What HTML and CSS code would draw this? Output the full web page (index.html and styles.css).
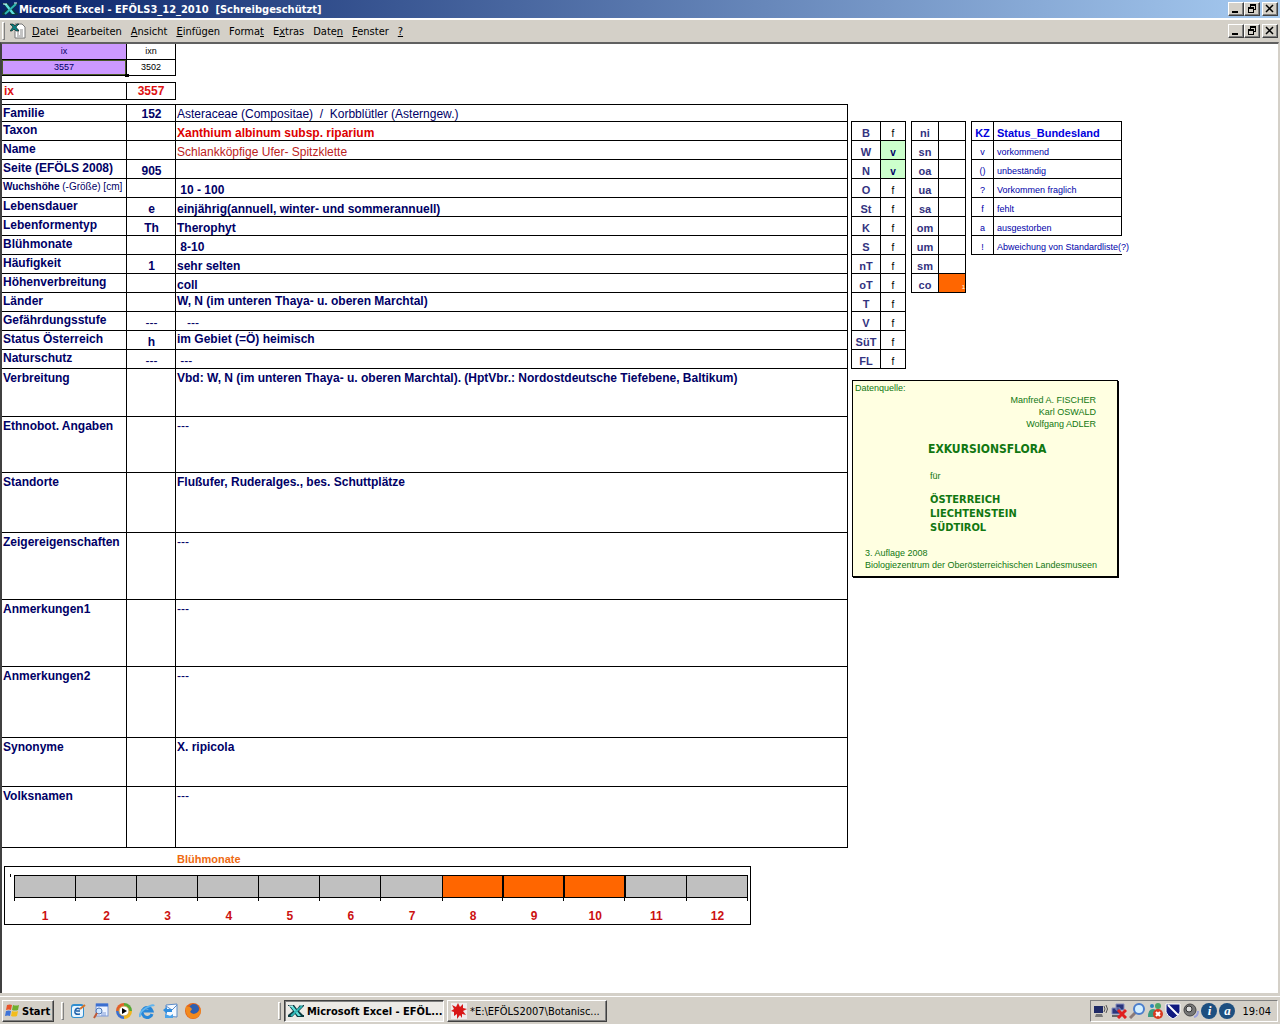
FILE: index.html
```html
<!DOCTYPE html>
<html lang="de">
<head>
    <meta charset="UTF-8">
    <meta name="viewport" content="width=device-width, initial-scale=1.0">
    <title>Microsoft Excel - EFÖLS3_12_2010 [Schreibgeschützt]</title>
    <link rel="stylesheet" href="styles.css">
</head>
<body>
    <!-- Shared icons -->
    <svg class="defs" aria-hidden="true">
        <symbol id="excel" viewBox="0 0 16 16">
            <path d="M0 2h6l3 4 3-4h4v1l-5 5 4 4h1v2H9l-2-3-3 3H0v-2l5-4-4-5H0z" fill="#0a3a40"/>
            <path d="M2 3h3l8 10h-3z" fill="#5fe0dc"/>
            <path d="M14 3L3 13" stroke="#2fb5b5" stroke-width="2"/>
            <path d="M1 3h4M12 2h3" stroke="#d8ffff"/>
        </symbol>
        <symbol id="min" viewBox="0 0 12 10"><path d="M2 7h6v2H2z"/></symbol>
        <symbol id="restore" viewBox="0 0 12 10">
            <path d="M4 0h6v6H8V5h1V2H5v1H4zM2 3h6v6H2zM3 5v3h4V5z" fill-rule="evenodd"/>
        </symbol>
        <symbol id="close" viewBox="0 0 12 10"><path d="M2 1l7 7M9 1L2 8" stroke="#000" stroke-width="1.5"/></symbol>
    </svg>

    <header class="titlebar">
        <svg class="icon"><use href="#excel"/></svg>
        <h1>Microsoft Excel - EFÖLS3_12_2010&nbsp; [Schreibgeschützt]</h1>
        <div class="winbuttons">
            <button aria-label="Minimieren"><svg><use href="#min"/></svg></button>
            <button aria-label="Wiederherstellen"><svg><use href="#restore"/></svg></button>
            <button class="close" aria-label="Schließen"><svg><use href="#close"/></svg></button>
        </div>
    </header>

    <nav class="menubar">
        <span class="grip"></span>
        <svg class="icon" viewBox="0 0 16 16">
            <path d="M5 1h7l3 3v11H5z" fill="#fff" stroke="#777"/>
            <path d="M7 7h2M10 7h3M7 9h2M10 9h3M7 11h2M10 11h3M7 13h6" stroke="#888"/>
            <path d="M0 1h3l2 2 2-2h2L6 4l3 4H6L4 6 2 8H0l3-4z" fill="#0b7f80" stroke="#000" stroke-width=".5"/>
        </svg>
        <button><u>D</u>atei</button>
        <button><u>B</u>earbeiten</button>
        <button><u>A</u>nsicht</button>
        <button><u>E</u>infügen</button>
        <button>Forma<u>t</u></button>
        <button>E<u>x</u>tras</button>
        <button>Date<u>n</u></button>
        <button><u>F</u>enster</button>
        <button><u>?</u></button>
        <div class="winbuttons">
            <button aria-label="Minimieren"><svg><use href="#min"/></svg></button>
            <button aria-label="Wiederherstellen"><svg><use href="#restore"/></svg></button>
            <button class="close" aria-label="Schließen"><svg><use href="#close"/></svg></button>
        </div>
    </nav>

    <main class="sheet">
        <div class="columns">
            <div class="left">
                <table class="grid index">
                    <tr><td class="purple">ix</td><td>ixn</td></tr>
                    <tr><td class="purple selected">3557</td><td>3502</td></tr>
                </table>
                <table class="grid current">
                    <tr><th scope="row">ix</th><td>3557</td></tr>
                </table>

                <!-- Species record -->
                <table class="grid record">
                    <colgroup><col class="c-label"><col class="c-code"><col class="c-text"></colgroup>
                    <tr class="first"><th scope="row">Familie</th><td>152</td><td class="plain">Asteraceae (Compositae)&nbsp; /&nbsp; Korbblütler (Asterngew.)</td></tr>
                    <tr><th scope="row">Taxon</th><td></td><td class="red">Xanthium albinum subsp. riparium</td></tr>
                    <tr><th scope="row">Name</th><td></td><td class="plain darkred">Schlankköpfige Ufer- Spitzklette</td></tr>
                    <tr><th scope="row">Seite (EFÖLS 2008)</th><td>905</td><td></td></tr>
                    <tr><th scope="row" class="small">Wuchshöhe <span>(-Größe) [cm]</span></th><td></td><td>&nbsp;10 - 100</td></tr>
                    <tr><th scope="row">Lebensdauer</th><td>e</td><td>einjährig(annuell, winter- und sommerannuell)</td></tr>
                    <tr><th scope="row">Lebenformentyp</th><td>Th</td><td>Therophyt</td></tr>
                    <tr><th scope="row">Blühmonate</th><td></td><td>&nbsp;8-10</td></tr>
                    <tr><th scope="row">Häufigkeit</th><td>1</td><td>sehr selten</td></tr>
                    <tr><th scope="row">Höhenverbreitung</th><td></td><td>coll</td></tr>
                    <tr><th scope="row">Länder</th><td></td><td class="top">W, N (im unteren Thaya- u. oberen Marchtal)</td></tr>
                    <tr><th scope="row">Gefährdungsstufe</th><td class="plain">---</td><td class="plain">&nbsp;&nbsp; ---</td></tr>
                    <tr><th scope="row">Status Österreich</th><td>h</td><td class="top">im Gebiet (=Ö) heimisch</td></tr>
                    <tr><th scope="row">Naturschutz</th><td class="plain">---</td><td class="plain">&nbsp;---</td></tr>
                    <tr class="tall h48"><th scope="row">Verbreitung</th><td></td><td>Vbd: W, N (im unteren Thaya- u. oberen Marchtal). (HptVbr.: Nordostdeutsche Tiefebene, Baltikum)</td></tr>
                    <tr class="tall h56"><th scope="row">Ethnobot. Angaben</th><td></td><td class="plain">---</td></tr>
                    <tr class="tall h60"><th scope="row">Standorte</th><td></td><td>Flußufer, Ruderalges., bes. Schuttplätze</td></tr>
                    <tr class="tall h67"><th scope="row">Zeigereigenschaften</th><td></td><td class="plain">---</td></tr>
                    <tr class="tall h67"><th scope="row">Anmerkungen1</th><td></td><td class="plain">---</td></tr>
                    <tr class="tall h71"><th scope="row">Anmerkungen2</th><td></td><td class="plain">---</td></tr>
                    <tr class="tall h49"><th scope="row">Synonyme</th><td></td><td>X. ripicola</td></tr>
                    <tr class="tall h61"><th scope="row">Volksnamen</th><td></td><td class="plain">---</td></tr>
                </table>
            </div>

            <div class="right">
                <div class="codes">
                    <table class="grid boxed states">
                        <tr><th scope="row">B</th><td>f</td></tr>
                        <tr><th scope="row">W</th><td class="green">v</td></tr>
                        <tr><th scope="row">N</th><td class="green">v</td></tr>
                        <tr><th scope="row">O</th><td>f</td></tr>
                        <tr><th scope="row">St</th><td>f</td></tr>
                        <tr><th scope="row">K</th><td>f</td></tr>
                        <tr><th scope="row">S</th><td>f</td></tr>
                        <tr><th scope="row">nT</th><td>f</td></tr>
                        <tr><th scope="row">oT</th><td>f</td></tr>
                        <tr><th scope="row">T</th><td>f</td></tr>
                        <tr><th scope="row">V</th><td>f</td></tr>
                        <tr><th scope="row">SüT</th><td>f</td></tr>
                        <tr><th scope="row">FL</th><td>f</td></tr>
                    </table>
                    <table class="grid boxed levels">
                        <tr><th scope="row">ni</th><td></td></tr>
                        <tr><th scope="row">sn</th><td></td></tr>
                        <tr><th scope="row">oa</th><td></td></tr>
                        <tr><th scope="row">ua</th><td></td></tr>
                        <tr><th scope="row">sa</th><td></td></tr>
                        <tr><th scope="row">om</th><td></td></tr>
                        <tr><th scope="row">um</th><td></td></tr>
                        <tr><th scope="row">sm</th><td></td></tr>
                        <tr><th scope="row">co</th><td class="orange">1</td></tr>
                    </table>
                    <table class="grid boxed legend">
                        <tr><th scope="col">KZ</th><th scope="col">Status_Bundesland</th></tr>
                        <tr><td>v</td><td>vorkommend</td></tr>
                        <tr><td>()</td><td>unbeständig</td></tr>
                        <tr><td>?</td><td>Vorkommen fraglich</td></tr>
                        <tr><td>f</td><td>fehlt</td></tr>
                        <tr><td>a</td><td>ausgestorben</td></tr>
                        <tr><td>!</td><td class="open">Abweichung von Standardliste(?)</td></tr>
                    </table>
                </div>

                <aside class="source">
                    <p>Datenquelle:</p>
                    <p class="authors">Manfred A. FISCHER<br>Karl OSWALD<br>Wolfgang ADLER</p>
                    <h2>EXKURSIONSFLORA</h2>
                    <p class="for">für</p>
                    <p class="countries">ÖSTERREICH<br>LIECHTENSTEIN<br>SÜDTIROL</p>
                    <p class="edition">3. Auflage 2008<br>Biologiezentrum der Oberösterreichischen Landesmuseen</p>
                </aside>
            </div>
        </div>

        <!-- Flowering months -->
        <section class="bloom">
            <h2>Blühmonate</h2>
            <ol class="months">
                <li><i></i>1</li>
                <li><i></i>2</li>
                <li><i></i>3</li>
                <li><i></i>4</li>
                <li><i></i>5</li>
                <li><i></i>6</li>
                <li><i></i>7</li>
                <li class="on"><i></i>8</li>
                <li class="on"><i></i>9</li>
                <li class="on"><i></i>10</li>
                <li><i></i>11</li>
                <li><i></i>12</li>
            </ol>
        </section>
    </main>

    <footer class="taskbar">
        <button class="start">
            <svg viewBox="0 0 16 16">
                <path d="M3 2q3-1 5 0L7 7q-2-1-5 0z" fill="#e8542a"/>
                <path d="M9 2q3 1 6 0l-1 5q-3 1-6 0z" fill="#6fae2e"/>
                <path d="M2 8q3-1 5 0l-1 5q-2-1-5 0z" fill="#3f74d8"/>
                <path d="M8 8q3 1 6 0l-1 5q-3 1-6 0z" fill="#f3bd1c"/>
            </svg>
            Start
        </button>
        <span class="bar"></span>
        <div class="quick">
            <a href="#" aria-label="Desktop"><svg viewBox="0 0 16 16">
                <rect x="1" y="1" width="13" height="14" rx="3" fill="#2f8ed0"/>
                <rect x="2" y="3" width="11" height="11" rx="2" fill="#e8f5ff"/>
                <path d="M10 6Q6 4 5 8t5 3M6 8h4" fill="none" stroke="#1d5fa8" stroke-width="1.5"/>
                <path d="M10 6l5-4" stroke="#d6742a" stroke-width="2"/>
            </svg></a>
            <a href="#" aria-label="Suche"><svg viewBox="0 0 16 16">
                <rect x="3" y="1" width="12" height="12" fill="#eef4ff" stroke="#7d9ad8"/>
                <path d="M3 2h12" stroke="#3b6fd0" stroke-width="3"/>
                <path d="M8 10h5M8 12h5" stroke="#7d9ad8"/>
                <circle cx="6" cy="8" r="3" fill="#cfe6ff" stroke="#5077b5"/>
                <path d="M4 10l-3 5" stroke="#c05a35" stroke-width="2"/>
            </svg></a>
            <a href="#" aria-label="Media Player"><svg viewBox="0 0 16 16">
                <path d="M8 8V0a8 8 0 0 1 8 8z" fill="#57a834"/>
                <path d="M8 8h8a8 8 0 0 1-8 8z" fill="#f0b51c"/>
                <path d="M8 8v8a8 8 0 0 1-8-8z" fill="#3b6fd0"/>
                <path d="M8 8H0a8 8 0 0 1 8-8z" fill="#e2602a"/>
                <circle cx="8" cy="8" r="5" fill="#fff" stroke="#c9a24a"/>
                <path d="M6 5l5 3-5 3z" fill="#000"/>
            </svg></a>
            <a href="#" aria-label="Internet Explorer"><svg viewBox="0 0 16 16">
                <path d="M13 11a5 5 0 1 1 0-3H5" fill="none" stroke="#2786d8" stroke-width="3"/>
                <path d="M1 14Q0 9 7 5t8-2" fill="none" stroke="#62b5ee" stroke-width="2"/>
            </svg></a>
            <a href="#" aria-label="Outlook Express"><svg viewBox="0 0 16 16">
                <path d="M4 2l11-1v13l-11-1z" fill="#f4f9ff" stroke="#5b8bc8"/>
                <path d="M4 3l6 4 5-5" fill="none" stroke="#5b8bc8"/>
                <path d="M1 7l4-3v2h5v3H5v2z" fill="#2f8ee0"/>
                <path d="M3 11v4h8v-4l-3 2z" fill="#4aa3ea"/>
            </svg></a>
            <a href="#" aria-label="Firefox"><svg viewBox="0 0 16 16">
                <circle cx="8" cy="8" r="8" fill="#e4641a"/>
                <circle cx="9" cy="6" r="5" fill="#2f5fb0"/>
                <path d="M1 3q2 1 4 1l2 2-2 3q3 4 8 0 3-3 1-6 4 6-1 11-7 4-11-2-2-4-1-9z" fill="#f28a1e"/>
            </svg></a>
        </div>
        <span class="bar"></span>
        <button class="task active"><svg class="icon"><use href="#excel"/></svg>Microsoft Excel - EFÖL...</button>
        <button class="task">
            <svg class="icon" viewBox="0 0 16 16">
                <rect width="16" height="16" fill="#eee"/>
                <path d="M7 0l2 4 3-3v4l4 1-4 2 3 4-4-1v4l-2-3-3 4V11l-3 2V9L0 8l3-2-2-4 4 2z" fill="#d81818"/>
            </svg>
            *E:\EFÖLS2007\Botanisc...
        </button>
        <div class="tray">
            <svg viewBox="0 0 16 16">
                <path d="M1 3h9v7H1z" fill="#1f2a66"/><path d="M3 11h6l1 3H2z" fill="#777"/>
                <path d="M11 3q2 3 0 6M13 2q3 4 0 8" fill="none" stroke="#555"/>
            </svg>
            <svg viewBox="0 0 16 16">
                <path d="M5 1h8v6H5zM1 5h8v6H1z" fill="#2a357d" stroke="#8890c0"/><path d="M1 13h8" stroke="#666" stroke-width="2"/>
                <path d="M7 7l8 8M15 7l-8 8" stroke="#e02020" stroke-width="3"/>
            </svg>
            <svg viewBox="0 0 16 16">
                <path d="M7 9l-6 6" stroke="#8b7a78" stroke-width="3"/>
                <circle cx="10" cy="6" r="5" fill="#d4efff" stroke="#4a7dcc" stroke-width="2"/>
            </svg>
            <svg viewBox="0 0 16 16">
                <circle cx="5" cy="3" r="2" fill="#2a83c0"/><circle cx="11" cy="3" r="3" fill="#4aa66a"/>
                <path d="M1 14q0-8 5-8t4 8zM7 9q2-4 8-1v4H7z" fill="#3a9a80"/>
                <circle cx="11" cy="11" r="5" fill="#d83a20"/><path d="M9 9l4 4M13 9l-4 4" stroke="#fff" stroke-width="2"/>
            </svg>
            <svg viewBox="0 0 16 16">
                <path d="M1 1h14v8q-1 4-7 7-6-3-7-7z" fill="#101a80" stroke="#fff"/>
                <path d="M3 2l10 10" stroke="#fff" stroke-width="2"/>
            </svg>
            <svg viewBox="0 0 16 16">
                <circle cx="7" cy="7" r="6" fill="#777" stroke="#444"/><circle cx="6" cy="6" r="3" fill="#ddd" stroke="#333"/>
                <path d="M11 14q4-1 4-6" fill="none" stroke="#9aa0dd" stroke-width="2"/>
            </svg>
            <span class="round">i</span>
            <span class="round">a</span>
            <time>19:04</time>
        </div>
    </footer>
</body>
</html>
```
FILE: styles.css
```css
* {
    box-sizing: border-box;
}
body {
    margin: 0;
    min-height: 100vh;
    display: flex;
    flex-direction: column;
    background: #d4d0c8;
    color: #000;
    font-family: "DejaVu Sans Condensed", "DejaVu Sans", sans-serif;
    font-size: 11px;
}
h1, h2, p, ol {
    margin: 0;
    padding: 0;
    font-size: inherit;
}
button {
    font: inherit;
    color: inherit;
    background: #d4d0c8;
    border: none;
    padding: 0;
    white-space: nowrap;
}
.defs {
    position: absolute;
    width: 0;
    height: 0;
}
.icon {
    width: 16px;
    height: 16px;
    flex: none;
}

/* Title and menu */
.titlebar {
    display: flex;
    align-items: center;
    gap: 1px;
    height: 18px;
    padding: 0 2px;
    background: linear-gradient(to right, #0a246a, #a6caf0);
    color: #fff;
}
.menubar {
    display: flex;
    align-items: center;
    height: 24px;
    padding: 0 2px;
    border-top: 2px solid #fff;
}
.menubar > button {
    margin-right: 9px;
}
.menubar > .icon {
    margin: 0 6px 0 5px;
}
.grip {
    width: 3px;
    height: 18px;
    border: 1px solid;
    border-color: #fff #808080 #808080 #fff;
}
.winbuttons {
    display: flex;
    margin-left: auto;
}
.winbuttons button {
    width: 16px;
    height: 14px;
    border: 1px solid;
    border-color: #fff #404040 #404040 #fff;
    box-shadow: inset -1px -1px #808080;
}
.winbuttons .close {
    margin-left: 2px;
}
.winbuttons svg {
    display: block;
    width: 12px;
    height: 10px;
    margin-left: 1px;
}

/* Worksheet */
.sheet {
    flex: 1;
    background: #fff;
    border: 2px solid #404040;
    border-top-color: #606060;
    border-right: 1px solid #d4d0c8;
    border-bottom: none;
    margin-right: 1px;
    font-family: "Liberation Sans", Arial, sans-serif;
    font-size: 12px;
    line-height: 15px;
    color: #000066;
}
.columns {
    display: flex;
    gap: 3px;
}
.grid {
    border-spacing: 0;
    table-layout: fixed;
}
.grid td, .grid th {
    padding: 0;
    border-right: 1px solid #000;
    border-bottom: 1px solid #000;
    white-space: nowrap;
}
.boxed {
    border-left: 1px solid #000;
}
.index, .current {
    width: 174px;
    text-align: center;
}
.index td:first-child, .current th {
    width: 125px;
}
.index td {
    height: 16px;
    font-size: 9px;
    line-height: 15px;
    color: #000;
}
.index .purple {
    background: #cc99ff;
    color: #000066;
}
.index .selected {
    position: relative;
    box-shadow: inset 0 0 0 1px #4b5b2b;
}
.index .selected::after {
    content: "";
    position: absolute;
    right: -3px;
    bottom: -2px;
    width: 4px;
    height: 3px;
    background: #000;
}
.current {
    margin: 6px 0 4px;
    border-top: 1px solid #000;
    color: #dd1111;
    font-weight: bold;
}
.current th {
    text-align: left;
    padding-left: 2px;
}
.current td, .current th {
    height: 17px;
}
.record {
    width: 846px;
    border-top: 1px solid #000;
    font-weight: bold;
}
.c-label {
    width: 125px;
}
.c-code {
    width: 49px;
}
.record tr {
    height: 19px;
}
.record .first {
    height: 17px;
}
.record th {
    text-align: left;
    vertical-align: top;
    padding: 1px 0 0 1px;
}
.record td {
    vertical-align: bottom;
    padding-left: 1px;
    line-height: 13px;
}
.record td:nth-child(2) {
    text-align: center;
}
.record .small {
    font-size: 10px;
    padding-top: 0;
}
.record .small span, .record .plain {
    font-weight: normal;
}
.record .top {
    vertical-align: top;
    padding-top: 2px;
}
.record .tall td {
    vertical-align: top;
    padding-top: 3px;
}
.record .tall th {
    padding-top: 2px;
}
.record .h48 { height: 48px; }
.record .h49 { height: 49px; }
.record .h56 { height: 56px; }
.record .h60 { height: 60px; }
.record .h61 { height: 61px; }
.record .h67 { height: 67px; }
.record .h71 { height: 71px; }
.red {
    color: #dd0000;
}
.darkred {
    color: #bb2222;
}

/* Codes and legend */
.right {
    padding-top: 77px;
}
.codes {
    display: flex;
    align-items: flex-start;
    gap: 5px;
    height: 248px;
    font-size: 10px;
    line-height: 13px;
}
.boxed {
    border-top: 1px solid #000;
    text-align: center;
}
.boxed tr {
    height: 19px;
}
.boxed td, .boxed th {
    vertical-align: bottom;
}
.states {
    width: 55px;
    color: #000;
}
.states th, .levels th {
    color: #333380;
    font-size: 11px;
}
.states td {
    width: 25px;
}
.levels {
    width: 55px;
}
.states .green {
    background: #ccffcc;
    color: #000066;
    font-weight: bold;
}
.levels .orange {
    background: #ff6600;
    color: #ffe;
    font-size: 6px;
    line-height: 10px;
    text-align: right;
}
.legend {
    width: 151px;
    color: #0000aa;
    font-size: 9px;
}
.legend th {
    font-size: 11px;
    color: #0000dd;
}
.legend th:first-child {
    width: 22px;
}
.legend th:last-child, .legend td:last-child {
    text-align: left;
    padding-left: 3px;
}
.legend .open {
    border-right: none;
}

/* Source note */
.source {
    width: 266px;
    margin: 11px 0 0 1px;
    padding: 1px 12px 5px;
    border: 1px solid #000;
    box-shadow: 1px 1px #000;
    background: #ffffe1;
    color: #117711;
    font-size: 9px;
    line-height: 12px;
    white-space: nowrap;
}
.source p:first-child {
    margin-left: -10px;
}
.source .authors {
    text-align: right;
    padding-right: 9px;
}
.source h2 {
    margin: 11px 0 13px 63px;
    font: bold 12px/16px "DejaVu Sans Condensed", "DejaVu Sans", sans-serif;
}
.source .for {
    margin-left: 65px;
}
.source .countries {
    margin: 11px 0 12px 65px;
    font: bold 11px/14px "DejaVu Sans Condensed", "DejaVu Sans", sans-serif;
}

/* Flowering months chart */
.bloom h2 {
    margin: 4px 0 0 175px;
    font-size: 11px;
    line-height: 14px;
    color: #ee6a11;
}
.months {
    position: relative;
    display: grid;
    grid-template-columns: 62px repeat(11, 1fr);
    width: 747px;
    height: 59px;
    margin-left: 2px;
    padding: 8px 2px 0 9px;
    border: 1px solid #000;
    list-style: none;
    text-align: center;
    font-weight: bold;
    color: #cc1111;
    line-height: 18px;
}
.months::before {
    content: "";
    position: absolute;
    top: 7px;
    left: 5px;
    width: 1px;
    height: 3px;
    background: #000;
}
.months i {
    display: block;
    height: 23px;
    margin-bottom: 9px;
    border: 1px solid #000;
    border-left: none;
    background: #c0c0c0;
    position: relative;
}
.months i::after {
    content: "";
    position: absolute;
    top: 100%;
    right: -1px;
    width: 1px;
    height: 4px;
    background: #000;
}
.months li:first-child i {
    border-left: 1px solid #000;
}
.months li:first-child i::before {
    content: "";
    position: absolute;
    top: 100%;
    left: -1px;
    width: 1px;
    height: 4px;
    background: #000;
}
.months .on i {
    background: #ff6600;
    border-right-width: 2px;
}

/* Taskbar */
.taskbar {
    display: flex;
    align-items: center;
    height: 31px;
    padding: 4px 2px 0;
    border-top: 1px solid #d4d0c8;
    box-shadow: inset 0 2px #d4d0c8, inset 0 3px #fff;
}
.taskbar button {
    display: flex;
    align-items: center;
    height: 22px;
    border: 1px solid;
    border-color: #fff #404040 #404040 #fff;
    box-shadow: inset -1px -1px #808080;
}
.start {
    width: 52px;
    padding-left: 1px;
    gap: 2px;
    font-weight: bold;
}
.start svg, .quick svg, .tray svg {
    display: block;
    width: 16px;
    height: 16px;
    flex: none;
}
.bar {
    width: 3px;
    height: 18px;
    margin-left: 7px;
    border: 1px solid;
    border-color: #fff #808080 #808080 #fff;
}
.quick {
    display: flex;
    gap: 7px;
    width: 207px;
    padding-left: 6px;
}
.taskbar .task {
    width: 160px;
    margin-left: 3px;
    padding-left: 3px;
    gap: 3px;
    overflow: hidden;
}
.taskbar .active {
    background: #eceae6;
    border-color: #404040 #fff #fff #404040;
    box-shadow: inset 1px 1px #808080;
    font-weight: bold;
}
.tray {
    display: flex;
    align-items: center;
    gap: 2px;
    height: 22px;
    margin-left: auto;
    padding: 0 6px 0 2px;
    border: 1px solid;
    border-color: #808080 #fff #fff #808080;
}
.round {
    width: 16px;
    height: 16px;
    border-radius: 50%;
    background: #1d4f80;
    color: #fff;
    font: italic bold 13px/15px "Liberation Serif", serif;
    text-align: center;
}
.tray time {
    margin-left: 5px;
}
```
